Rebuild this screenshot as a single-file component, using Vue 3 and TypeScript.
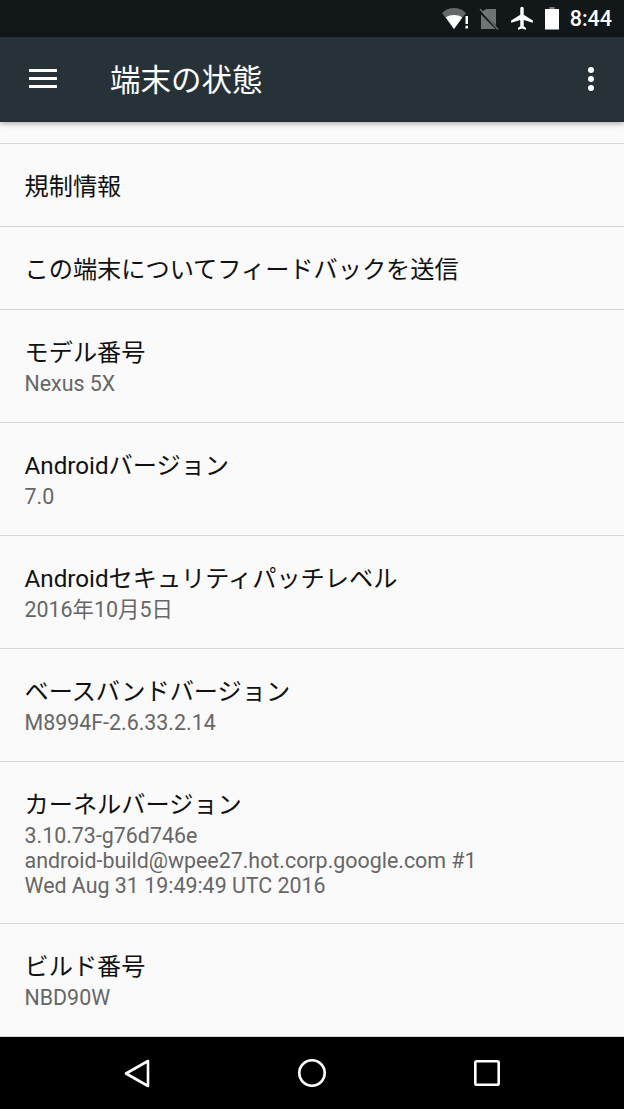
<script setup lang="ts">
interface Row {
  title: string
  lines?: string[]
}

const rows: Row[] = [
  { title: '規制情報' },
  { title: 'この端末についてフィードバックを送信' },
  { title: 'モデル番号', lines: ['Nexus 5X'] },
  { title: 'Androidバージョン', lines: ['7.0'] },
  { title: 'Androidセキュリティパッチレベル', lines: ['2016年10月5日'] },
  { title: 'ベースバンドバージョン', lines: ['M8994F-2.6.33.2.14'] },
  {
    title: 'カーネルバージョン',
    lines: ['3.10.73-g76d746e', 'android-build@wpee27.hot.corp.google.com #1', 'Wed Aug 31 19:49:49 UTC 2016'],
  },
  { title: 'ビルド番号', lines: ['NBD90W'] },
]
</script>

<template>
  <div class="screen">
    <div class="status-bar">
      <svg class="st-wifi" width="27" height="23" viewBox="0 0 27 23">
        <path d="M0 6C3.500 2.800 7.500 1 12 1s8.500 1.800 12 5L12 22z" fill="#fff" fill-opacity=".35" />
        <path d="M3.800 10.500C6.200 8.700 9 8 12 8s5.800.7 8.200 2.500L12 22z" fill="#fff" />
        <path d="M23.500 9H26v8h-2.500zM23.500 18.800H26v2.700h-2.500z" fill="#fff" />
      </svg>
      <svg class="st-sim" width="20" height="22" viewBox="0 0 20 22">
        <path d="M7 1h10v16.500L3.500 3.500zM2 6.500V21h14.500z" fill="#fff" fill-opacity=".4" />
        <path d="M1 1l18 20.500" stroke="#fff" stroke-opacity=".4" stroke-width="1.200" />
      </svg>
      <svg class="st-plane" width="24" height="25" viewBox="1 1.500 21 21.500">
        <path d="M21 16v-2l-8-5V3.500C13 2.670 12.330 2 11.500 2S10 2.670 10 3.500V9l-8 5v2l8-2.500V19l-2 1.500V22l3.500-1 3.500 1v-1.500L13 19v-5.500z" fill="#fff" />
      </svg>
      <svg class="st-battery" width="14" height="23" viewBox="0 0 14 23">
        <path d="M4.500 0h5v2H4.500z" fill="#fff" fill-opacity=".45" />
        <path d="M0 2h14v20.500H0z" fill="#fff" />
      </svg>
      <span class="clock">8:44</span>
    </div>

    <header class="toolbar">
      <div class="menu-icon">
        <span /><span /><span />
      </div>
      <h1 class="title">端末の状態</h1>
      <div class="more-icon">
        <span /><span /><span />
      </div>
    </header>

    <main class="list">
      <div class="list-top" />
      <div v-for="row in rows" :key="row.title" class="row">
        <div class="row-title">{{ row.title }}</div>
        <div v-for="line in row.lines" :key="line" class="row-sub">{{ line }}</div>
      </div>
    </main>

    <nav class="nav-bar">
      <svg width="26" height="29" viewBox="0 0 26 29">
        <path d="M24 2v25L2 14.500z" fill="none" stroke="#fff" stroke-width="2.600" stroke-linejoin="round" />
      </svg>
      <svg width="28" height="28" viewBox="0 0 28 28">
        <circle cx="14" cy="14" r="12.700" fill="none" stroke="#fff" stroke-width="2.600" />
      </svg>
      <svg width="26" height="26" viewBox="0 0 26 26">
        <rect x="1.300" y="1.300" width="23.400" height="23.400" rx="1.500" fill="none" stroke="#fff" stroke-width="2.600" />
      </svg>
    </nav>
  </div>
</template>

<style scoped>
.screen {
  width: 624px;
  height: 1109px;
  display: flex;
  flex-direction: column;
  overflow: hidden;
  background: #fafafa;
  font-family: Roboto, "Noto Sans CJK JP", sans-serif;
}

.status-bar {
  height: 37px;
  flex-shrink: 0;
  background: #12171a;
  display: flex;
  align-items: center;
  justify-content: flex-end;
  padding-right: 12px;
  color: #fff;
}

.st-wifi {
  margin-right: 10px;
}

.st-sim {
  margin-right: 11px;
}

.st-plane {
  margin-right: 11px;
}

.st-battery {
  margin-right: 10px;
}

.clock {
  font-size: 21.500px;
  font-weight: 500;
  margin-left: 1px;
}

.toolbar {
  height: 85px;
  flex-shrink: 0;
  background: #263238;
  display: flex;
  align-items: center;
  padding: 0 30px 2px 29px;
  box-sizing: border-box;
  box-shadow: 0 2px 5px rgba(0, 0, 0, .3);
  position: relative;
  z-index: 1;
}

.menu-icon {
  width: 28px;
  display: flex;
  flex-direction: column;
  gap: 5px;
}

.menu-icon span {
  height: 3px;
  background: #fff;
}

.title {
  flex: 1;
  margin: 0 0 2px 53px;
  font-size: 30.500px;
  font-weight: 400;
  color: #fff;
}

.more-icon {
  display: flex;
  flex-direction: column;
  gap: 3px;
}

.more-icon span {
  width: 6px;
  height: 6px;
  border-radius: 50%;
  background: #fff;
}

.list {
  flex: 1;
  min-height: 0;
}

.list-top {
  height: 22px;
  border-bottom: 1px solid #d6d6d6;
  box-sizing: border-box;
}

.row {
  padding: 25px 24.500px 0;
  border-bottom: 1px solid #d6d6d6;
  box-sizing: border-box;
}

.row:nth-child(2),
.row:nth-child(3) {
  height: 83px;
}

.row:nth-child(4),
.row:nth-child(5),
.row:nth-child(6),
.row:nth-child(7),
.row:nth-child(9) {
  height: 113px;
}

.row:nth-child(8) {
  height: 162px;
}

.row-title {
  font-size: 24.200px;
  line-height: 36px;
  color: #111;
}

.row-sub {
  font-size: 21.400px;
  line-height: 25px;
  color: #666;
}

.nav-bar {
  height: 72px;
  flex-shrink: 0;
  background: #000;
  display: flex;
  align-items: center;
  justify-content: space-between;
  padding: 0 124px;
}
</style>
